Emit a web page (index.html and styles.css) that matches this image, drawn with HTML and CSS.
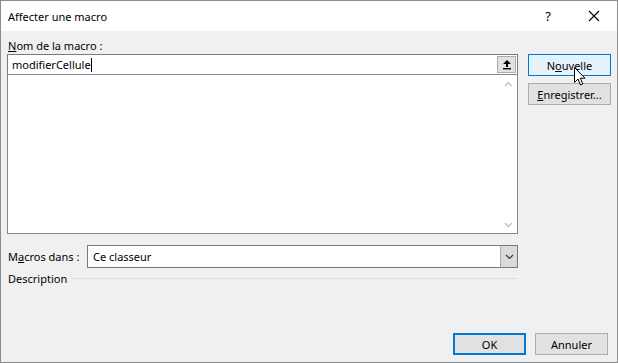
FILE: index.html
```html
<!DOCTYPE html>
<html lang="fr">
<head>
    <meta charset="UTF-8">
    <title>Affecter une macro</title>
    <link rel="stylesheet" href="styles.css">
</head>
<body>
    <div class="window">
        <div class="titlebar">
            <span class="title">Affecter une macro</span>
            <span class="help">?</span>
            <span class="close">
                <svg width="12" height="12" viewBox="0 0 12 12"><path d="M1 1 L11 11 M11 1 L1 11" stroke="#000" stroke-width="1.1"/></svg>
            </span>
        </div>

        <div class="content">
            <div class="main">
                <div class="left">
                    <div class="label"><u>N</u>om de la macro :</div>
                    <div class="namebox">
                        <span class="value">modifierCellule</span><span class="caret"></span>
                        <span class="refbtn">
                            <svg width="10" height="11" viewBox="0 0 10 11"><path d="M5 1 L9 5 L6 5 L6 8 L4 8 L4 5 L1 5 Z" fill="#000"/><rect x="1" y="9" width="8" height="1.4" fill="#000"/></svg>
                        </span>
                    </div>
                    <div class="list">
                        <div class="scroll">
                            <svg width="9" height="6" viewBox="0 0 9 6"><path d="M1 5 L4.5 1.5 L8 5" fill="none" stroke="#c2c2c2" stroke-width="1.3"/></svg>
                            <svg width="9" height="6" viewBox="0 0 9 6"><path d="M1 1 L4.5 4.5 L8 1" fill="none" stroke="#c2c2c2" stroke-width="1.3"/></svg>
                        </div>
                    </div>
                    <div class="row">
                        <span class="label">M<u>a</u>cros dans :</span>
                        <div class="combo">
                            <span class="value">Ce classeur</span>
                            <span class="dropbtn">
                                <svg width="9" height="6" viewBox="0 0 9 6"><path d="M1 1 L4.5 4.5 L8 1" fill="none" stroke="#333" stroke-width="1.1"/></svg>
                            </span>
                        </div>
                    </div>
                    <div class="group">
                        <span class="label">Description</span>
                        <span class="rule"></span>
                    </div>
                </div>
                <div class="side">
                    <button class="btn hot">N<u>o</u>uvelle</button>
                    <button class="btn"><u>E</u>nregistrer...</button>
                    <svg class="cursor" width="13" height="20" viewBox="0 0 13 20"><path d="M0.5 0.5 L0.5 15.5 L4 12 L6.5 18 L8.8 17 L6.3 11.2 L11 11.2 Z" fill="#fff" stroke="#000" stroke-width="1"/></svg>
                </div>
            </div>
            <div class="footer">
                <button class="btn default">OK</button>
                <button class="btn">Annuler</button>
            </div>
        </div>
    </div>
</body>
</html>
```

FILE: styles.css
```css
* {
    box-sizing: border-box;
}

body {
    margin: 0;
    font-family: "Segoe UI", "Noto Sans", sans-serif;
    font-size: 11px;
    color: #000;
}

.window {
    width: 618px;
    height: 363px;
    border: 1px solid #8c8c8c;
    background: #f0f0f0;
    display: flex;
    flex-direction: column;
}

.titlebar {
    height: 30px;
    background: #ffffff;
    display: flex;
    align-items: center;
    padding-left: 7px;
}

.title {
    flex: 1;
}

.help {
    width: 46px;
    text-align: center;
    font-size: 13px;
}

.close {
    width: 46px;
    display: flex;
    justify-content: center;
}

.content {
    flex: 1;
    display: flex;
    flex-direction: column;
    padding: 6px 6px 7px 6px;
}

.main {
    flex: 1;
    display: flex;
    gap: 10px;
}

.left {
    width: 511px;
    display: flex;
    flex-direction: column;
}

.label {
    height: 17px;
    line-height: 17px;
    padding-left: 1px;
}

.namebox {
    height: 21px;
    border: 1px solid #7a7a7a;
    background: #fff;
    display: flex;
    align-items: center;
    padding-left: 4px;
    padding-right: 1px;
}

.namebox .value {
    line-height: 16px;
}

.caret {
    width: 1px;
    height: 14px;
    background: #000;
}

.refbtn {
    margin-left: auto;
    width: 19px;
    height: 17px;
    background: #e1e1e1;
    border: 1px solid #adadad;
    display: flex;
    align-items: center;
    justify-content: center;
}

.list {
    height: 160px;
    margin-top: -1px;
    border: 1px solid #828790;
    background: #fff;
    display: flex;
    justify-content: flex-end;
}

.scroll {
    width: 17px;
    display: flex;
    flex-direction: column;
    justify-content: space-between;
    align-items: center;
    padding: 6px 0 5px;
}

.row {
    display: flex;
    align-items: center;
    margin-top: 11px;
}

.row .label {
    width: 80px;
}

.combo {
    flex: 1;
    height: 23px;
    border: 1px solid #7a7a7a;
    background: #fff;
    display: flex;
    align-items: center;
    padding-left: 5px;
}

.combo .value {
    flex: 1;
}

.dropbtn {
    width: 17px;
    height: 21px;
    background: #dadada;
    border-left: 1px solid #adadad;
    display: flex;
    align-items: center;
    justify-content: center;
}

.group {
    display: flex;
    align-items: center;
    margin-top: 2px;
}

.rule {
    flex: 1;
    height: 1px;
    background: #dcdcdc;
    margin-left: 4px;
}

.side {
    width: 83px;
    display: flex;
    flex-direction: column;
    gap: 7px;
    padding-top: 17px;
    position: relative;
}

.btn {
    height: 22px;
    font-family: inherit;
    font-size: 11px;
    background: #e1e1e1;
    border: 1px solid #adadad;
    padding: 0;
    color: #000;
}

.btn.hot {
    background: #e5f1fb;
    border-color: #0078d7;
}

.cursor {
    position: absolute;
    left: 46px;
    top: 30px;
}

.footer {
    display: flex;
    justify-content: flex-end;
    gap: 9px;
    padding-right: 3px;
}

.footer .btn {
    width: 73px;
}

.btn.default {
    border: 2px solid #0078d7;
}
```
